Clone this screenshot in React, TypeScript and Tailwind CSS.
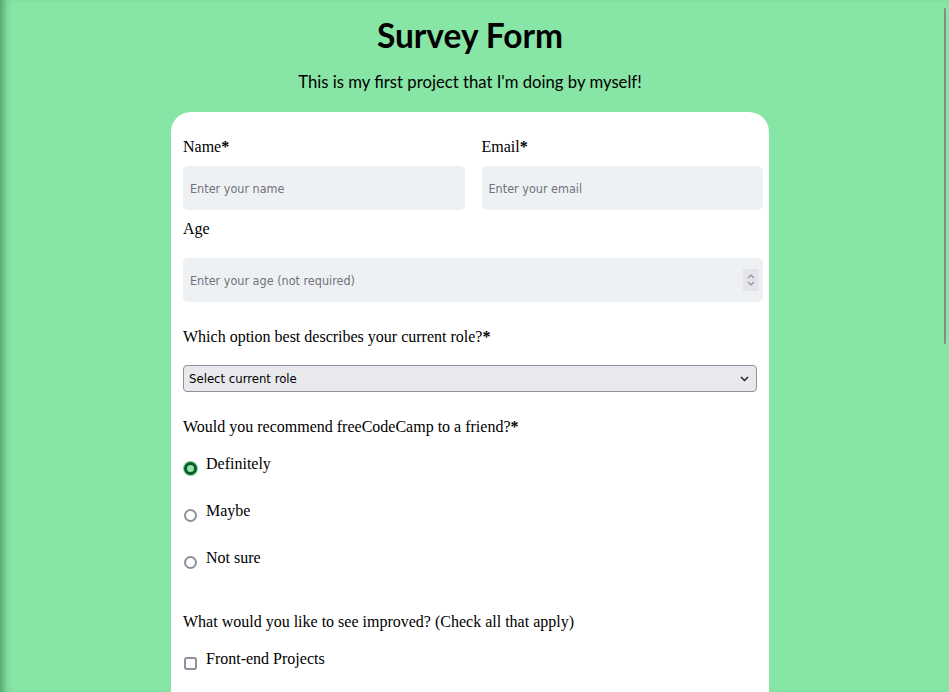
import React from "react";

const serif = { fontFamily: '"Liberation Serif", "Times New Roman", serif' };

function Radio({ checked, label }: { checked?: boolean; label: string }) {
  return (
    <label className="flex items-start text-[16px] leading-6 text-black" style={serif}>
      {checked ? (
        <span className="ml-px mt-[10px] box-border h-[13px] w-[13px] shrink-0 rounded-full border-[3px] border-[#0f5a2c] bg-[#8ee6ab] shadow-[0_0_0_1px_#6fd893]" />
      ) : (
        <span className="ml-px mt-[10px] box-border h-[13px] w-[13px] shrink-0 rounded-full border-2 border-[#8f8f9d] bg-white" />
      )}
      <span className="ml-[9px]">{label}</span>
    </label>
  );
}

function Check({ label }: { label: string }) {
  return (
    <label className="flex items-start text-[16px] leading-6 text-black" style={serif}>
      <span className="ml-px mt-[10px] box-border h-[13px] w-[13px] shrink-0 rounded-[3px] border-2 border-[#8f8f9d] bg-white" />
      <span className="ml-[9px]">{label}</span>
    </label>
  );
}

export default function App() {
  const ui = { fontFamily: '"DejaVu Sans Condensed", "DejaVu Sans", sans-serif' };
  return (
    <div className="relative h-[692px] overflow-hidden bg-[#87e5a5] shadow-[inset_9px_0_8px_-6px_rgba(0,60,20,0.45)]">
      <div className="w-[940px]" style={{ fontFamily: 'Lato, "Open Sans", sans-serif' }}>
        <h1 className="pt-[15px] text-center text-[33.5px] font-bold leading-10 text-black">Survey Form</h1>
        <p className="mt-[15px] text-center text-[16.7px] leading-6 text-black">
          This is my first project that I'm doing by myself!
        </p>
        <form className="mx-auto mt-[18px] w-[598px] rounded-t-[20px] bg-white pb-10 pl-3 pr-[6px] pt-[23px]">
          <div className="flex gap-[17px]">
            <div className="flex flex-1 flex-col">
              <label className="text-[16px] leading-6 text-black" style={serif}>Name<b>*</b></label>
              <input
                placeholder="Enter your name"
                className="mt-[7px] h-[44px] w-full rounded-[5px] bg-[#edf1f4] px-[7px] text-[12.5px] text-black outline-none placeholder:text-[#72727c]"
                style={ui}
              />
            </div>
            <div className="flex flex-1 flex-col">
              <label className="text-[16px] leading-6 text-black" style={serif}>Email<b>*</b></label>
              <input
                placeholder="Enter your email"
                className="mt-[7px] h-[44px] w-full rounded-[5px] bg-[#edf1f4] px-[7px] text-[12.5px] text-black outline-none placeholder:text-[#72727c]"
                style={ui}
              />
            </div>
          </div>

          <label className="mt-[7px] block text-[16px] leading-6 text-black" style={serif}>Age</label>
          <div className="mt-[17px] flex h-[44px] items-center rounded-[5px] bg-[#edf1f4] pl-[7px] pr-[4px]">
            <input
              placeholder="Enter your age (not required)"
              className="h-full flex-1 bg-transparent text-[12.5px] text-black outline-none placeholder:text-[#72727c]"
              style={ui}
            />
            <span className="flex h-[22px] w-[16px] flex-col items-center justify-center bg-[#e4e4ea]">
              <svg width="8" height="16" viewBox="0 0 8 16" fill="none" stroke="#8f8f9d" strokeWidth="1.2">
                <path d="M1 6 L4 3 L7 6" />
                <path d="M1 10 L4 13 L7 10" />
              </svg>
            </span>
          </div>

          <label className="mt-[23px] block text-[16px] leading-6 text-black" style={serif}>
            Which option best describes your current role?<b>*</b>
          </label>
          <div className="mt-[16px] flex h-[27px] w-[574px] items-center justify-between rounded-[4px] border border-[#8f8f9d] bg-[#e9e9ed] pl-[5px] pr-[7px] text-[13px] text-black" style={ui}>
            <span>Select current role</span>
            <svg width="9" height="6" viewBox="0 0 9 6" fill="none" stroke="#222" strokeWidth="1.5">
              <path d="M1 1 L4.5 4.5 L8 1" />
            </svg>
          </div>

          <p className="mt-[23px] text-[16px] leading-6 text-black" style={serif}>
            Would you recommend freeCodeCamp to a friend?<b>*</b>
          </p>
          <div className="mt-[13px] flex flex-col gap-[23px]">
            <Radio checked label="Definitely" />
            <Radio label="Maybe" />
            <Radio label="Not sure" />
          </div>

          <p className="mt-[40px] text-[16px] leading-6 text-black" style={serif}>
            What would you like to see improved? (Check all that apply)
          </p>
          <div className="mt-[13px] flex flex-col gap-[23px]">
            <Check label="Front-end Projects" />
          </div>
        </form>
      </div>
      <div className="absolute right-[3px] top-[8px] h-[336px] w-[2px] rounded bg-[#8a8a8a]" />
    </div>
  );
}
